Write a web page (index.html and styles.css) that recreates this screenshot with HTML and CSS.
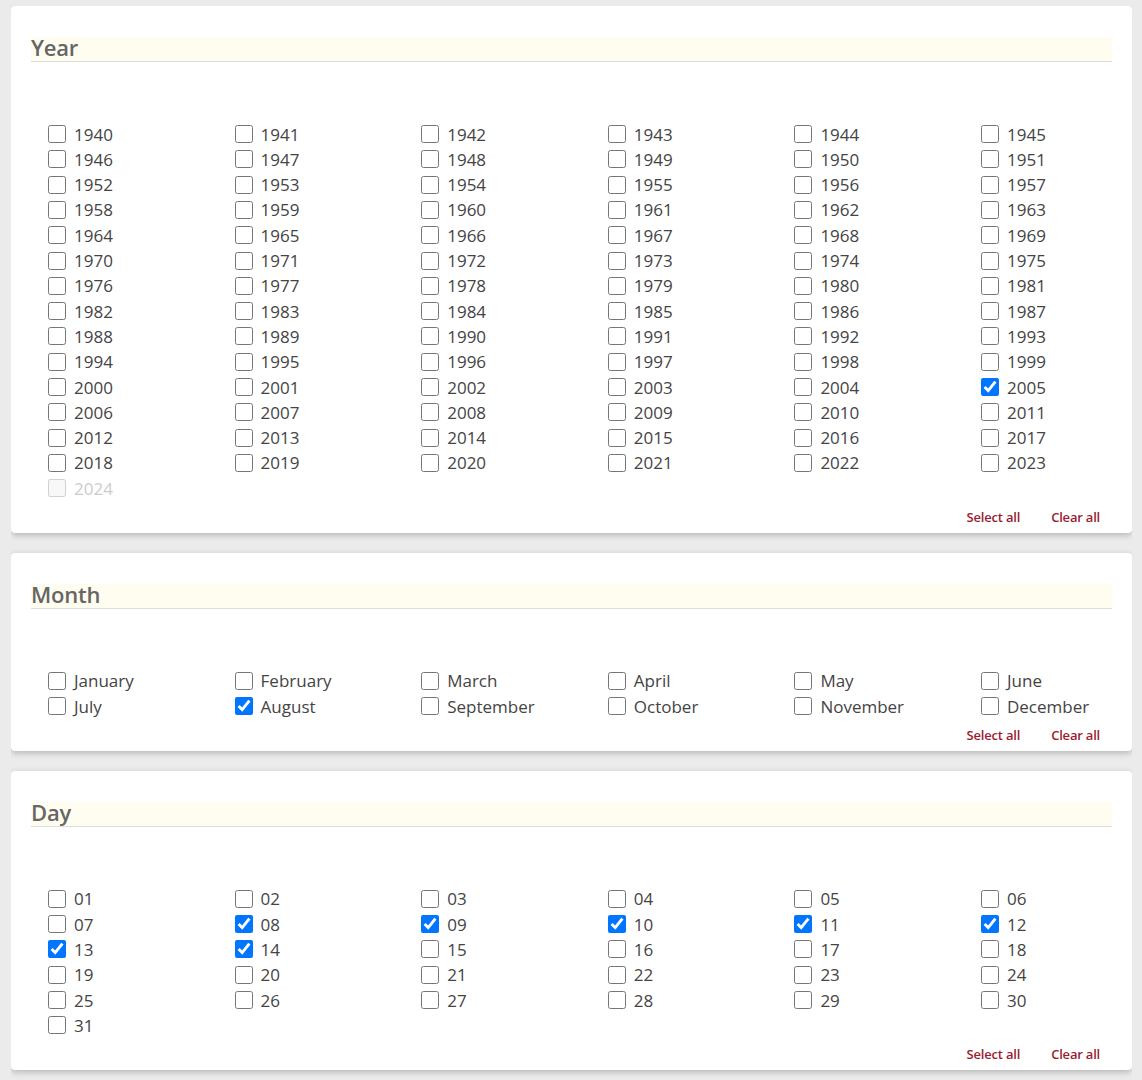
FILE: index.html
```html
<!DOCTYPE html>
<html>
<head>
<meta charset="utf-8">
<link rel="stylesheet" href="styles.css">
</head>
<body>
<section class="card">
  <h2 class="title">Year</h2>
  <div class="grid">
    <label class="opt"><input type="checkbox">1940</label>
    <label class="opt"><input type="checkbox">1941</label>
    <label class="opt"><input type="checkbox">1942</label>
    <label class="opt"><input type="checkbox">1943</label>
    <label class="opt"><input type="checkbox">1944</label>
    <label class="opt"><input type="checkbox">1945</label>
    <label class="opt"><input type="checkbox">1946</label>
    <label class="opt"><input type="checkbox">1947</label>
    <label class="opt"><input type="checkbox">1948</label>
    <label class="opt"><input type="checkbox">1949</label>
    <label class="opt"><input type="checkbox">1950</label>
    <label class="opt"><input type="checkbox">1951</label>
    <label class="opt"><input type="checkbox">1952</label>
    <label class="opt"><input type="checkbox">1953</label>
    <label class="opt"><input type="checkbox">1954</label>
    <label class="opt"><input type="checkbox">1955</label>
    <label class="opt"><input type="checkbox">1956</label>
    <label class="opt"><input type="checkbox">1957</label>
    <label class="opt"><input type="checkbox">1958</label>
    <label class="opt"><input type="checkbox">1959</label>
    <label class="opt"><input type="checkbox">1960</label>
    <label class="opt"><input type="checkbox">1961</label>
    <label class="opt"><input type="checkbox">1962</label>
    <label class="opt"><input type="checkbox">1963</label>
    <label class="opt"><input type="checkbox">1964</label>
    <label class="opt"><input type="checkbox">1965</label>
    <label class="opt"><input type="checkbox">1966</label>
    <label class="opt"><input type="checkbox">1967</label>
    <label class="opt"><input type="checkbox">1968</label>
    <label class="opt"><input type="checkbox">1969</label>
    <label class="opt"><input type="checkbox">1970</label>
    <label class="opt"><input type="checkbox">1971</label>
    <label class="opt"><input type="checkbox">1972</label>
    <label class="opt"><input type="checkbox">1973</label>
    <label class="opt"><input type="checkbox">1974</label>
    <label class="opt"><input type="checkbox">1975</label>
    <label class="opt"><input type="checkbox">1976</label>
    <label class="opt"><input type="checkbox">1977</label>
    <label class="opt"><input type="checkbox">1978</label>
    <label class="opt"><input type="checkbox">1979</label>
    <label class="opt"><input type="checkbox">1980</label>
    <label class="opt"><input type="checkbox">1981</label>
    <label class="opt"><input type="checkbox">1982</label>
    <label class="opt"><input type="checkbox">1983</label>
    <label class="opt"><input type="checkbox">1984</label>
    <label class="opt"><input type="checkbox">1985</label>
    <label class="opt"><input type="checkbox">1986</label>
    <label class="opt"><input type="checkbox">1987</label>
    <label class="opt"><input type="checkbox">1988</label>
    <label class="opt"><input type="checkbox">1989</label>
    <label class="opt"><input type="checkbox">1990</label>
    <label class="opt"><input type="checkbox">1991</label>
    <label class="opt"><input type="checkbox">1992</label>
    <label class="opt"><input type="checkbox">1993</label>
    <label class="opt"><input type="checkbox">1994</label>
    <label class="opt"><input type="checkbox">1995</label>
    <label class="opt"><input type="checkbox">1996</label>
    <label class="opt"><input type="checkbox">1997</label>
    <label class="opt"><input type="checkbox">1998</label>
    <label class="opt"><input type="checkbox">1999</label>
    <label class="opt"><input type="checkbox">2000</label>
    <label class="opt"><input type="checkbox">2001</label>
    <label class="opt"><input type="checkbox">2002</label>
    <label class="opt"><input type="checkbox">2003</label>
    <label class="opt"><input type="checkbox">2004</label>
    <label class="opt"><input type="checkbox" checked>2005</label>
    <label class="opt"><input type="checkbox">2006</label>
    <label class="opt"><input type="checkbox">2007</label>
    <label class="opt"><input type="checkbox">2008</label>
    <label class="opt"><input type="checkbox">2009</label>
    <label class="opt"><input type="checkbox">2010</label>
    <label class="opt"><input type="checkbox">2011</label>
    <label class="opt"><input type="checkbox">2012</label>
    <label class="opt"><input type="checkbox">2013</label>
    <label class="opt"><input type="checkbox">2014</label>
    <label class="opt"><input type="checkbox">2015</label>
    <label class="opt"><input type="checkbox">2016</label>
    <label class="opt"><input type="checkbox">2017</label>
    <label class="opt"><input type="checkbox">2018</label>
    <label class="opt"><input type="checkbox">2019</label>
    <label class="opt"><input type="checkbox">2020</label>
    <label class="opt"><input type="checkbox">2021</label>
    <label class="opt"><input type="checkbox">2022</label>
    <label class="opt"><input type="checkbox">2023</label>
    <label class="opt disabled"><input type="checkbox" disabled>2024</label>
  </div>
  <div class="actions"><a class="act">Select all</a><a class="act">Clear all</a></div>
</section>

<section class="card">
  <h2 class="title">Month</h2>
  <div class="grid">
    <label class="opt"><input type="checkbox">January</label>
    <label class="opt"><input type="checkbox">February</label>
    <label class="opt"><input type="checkbox">March</label>
    <label class="opt"><input type="checkbox">April</label>
    <label class="opt"><input type="checkbox">May</label>
    <label class="opt"><input type="checkbox">June</label>
    <label class="opt"><input type="checkbox">July</label>
    <label class="opt"><input type="checkbox" checked>August</label>
    <label class="opt"><input type="checkbox">September</label>
    <label class="opt"><input type="checkbox">October</label>
    <label class="opt"><input type="checkbox">November</label>
    <label class="opt"><input type="checkbox">December</label>
  </div>
  <div class="actions"><a class="act">Select all</a><a class="act">Clear all</a></div>
</section>

<section class="card">
  <h2 class="title">Day</h2>
  <div class="grid">
    <label class="opt"><input type="checkbox">01</label>
    <label class="opt"><input type="checkbox">02</label>
    <label class="opt"><input type="checkbox">03</label>
    <label class="opt"><input type="checkbox">04</label>
    <label class="opt"><input type="checkbox">05</label>
    <label class="opt"><input type="checkbox">06</label>
    <label class="opt"><input type="checkbox">07</label>
    <label class="opt"><input type="checkbox" checked>08</label>
    <label class="opt"><input type="checkbox" checked>09</label>
    <label class="opt"><input type="checkbox" checked>10</label>
    <label class="opt"><input type="checkbox" checked>11</label>
    <label class="opt"><input type="checkbox" checked>12</label>
    <label class="opt"><input type="checkbox" checked>13</label>
    <label class="opt"><input type="checkbox" checked>14</label>
    <label class="opt"><input type="checkbox">15</label>
    <label class="opt"><input type="checkbox">16</label>
    <label class="opt"><input type="checkbox">17</label>
    <label class="opt"><input type="checkbox">18</label>
    <label class="opt"><input type="checkbox">19</label>
    <label class="opt"><input type="checkbox">20</label>
    <label class="opt"><input type="checkbox">21</label>
    <label class="opt"><input type="checkbox">22</label>
    <label class="opt"><input type="checkbox">23</label>
    <label class="opt"><input type="checkbox">24</label>
    <label class="opt"><input type="checkbox">25</label>
    <label class="opt"><input type="checkbox">26</label>
    <label class="opt"><input type="checkbox">27</label>
    <label class="opt"><input type="checkbox">28</label>
    <label class="opt"><input type="checkbox">29</label>
    <label class="opt"><input type="checkbox">30</label>
    <label class="opt"><input type="checkbox">31</label>
  </div>
  <div class="actions"><a class="act">Select all</a><a class="act">Clear all</a></div>
</section>
</body>
</html>
```

FILE: styles.css
```css
html {
  background: #ebebeb;
}
body {
  margin: 6px 10px 0 11px;
  font-family: "Open Sans", "DejaVu Sans", sans-serif;
  background: #ebebeb;
}
.card {
  background: #ffffff;
  border-radius: 4px;
  box-shadow: 0 2px 6px rgba(0, 0, 0, 0.24);
  padding: 31px 20px 7px 20px;
  margin-bottom: 20px;
  display: flex;
  flex-direction: column;
}
.title {
  margin: 0;
  height: 24px;
  line-height: 20px;
  font-size: 22px;
  font-weight: 600;
  color: #666666;
  background: #fffdf0;
  border-bottom: 1px solid #dddddd;
  letter-spacing: -0.2px;
}
.grid {
  margin: 59.4px 0 0 16px;
  display: grid;
  grid-template-columns: repeat(6, 186.6px);
  grid-auto-rows: 25.3px;
}
.opt {
  display: flex;
  align-items: center;
  font-size: 17px;
  color: #444444;
  white-space: nowrap;
}
.opt input {
  width: 18px;
  height: 18px;
  margin: 0 8px 0 1px;
}
.opt.disabled {
  color: #cccccc;
}
.actions {
  margin-top: 7px;
  height: 18px;
  display: flex;
  justify-content: flex-end;
  gap: 31px;
  padding-right: 12px;
}
.act {
  font-size: 13px;
  line-height: 18px;
  font-weight: 600;
  color: #9b1b30;
  letter-spacing: -0.2px;
  cursor: pointer;
}
```
